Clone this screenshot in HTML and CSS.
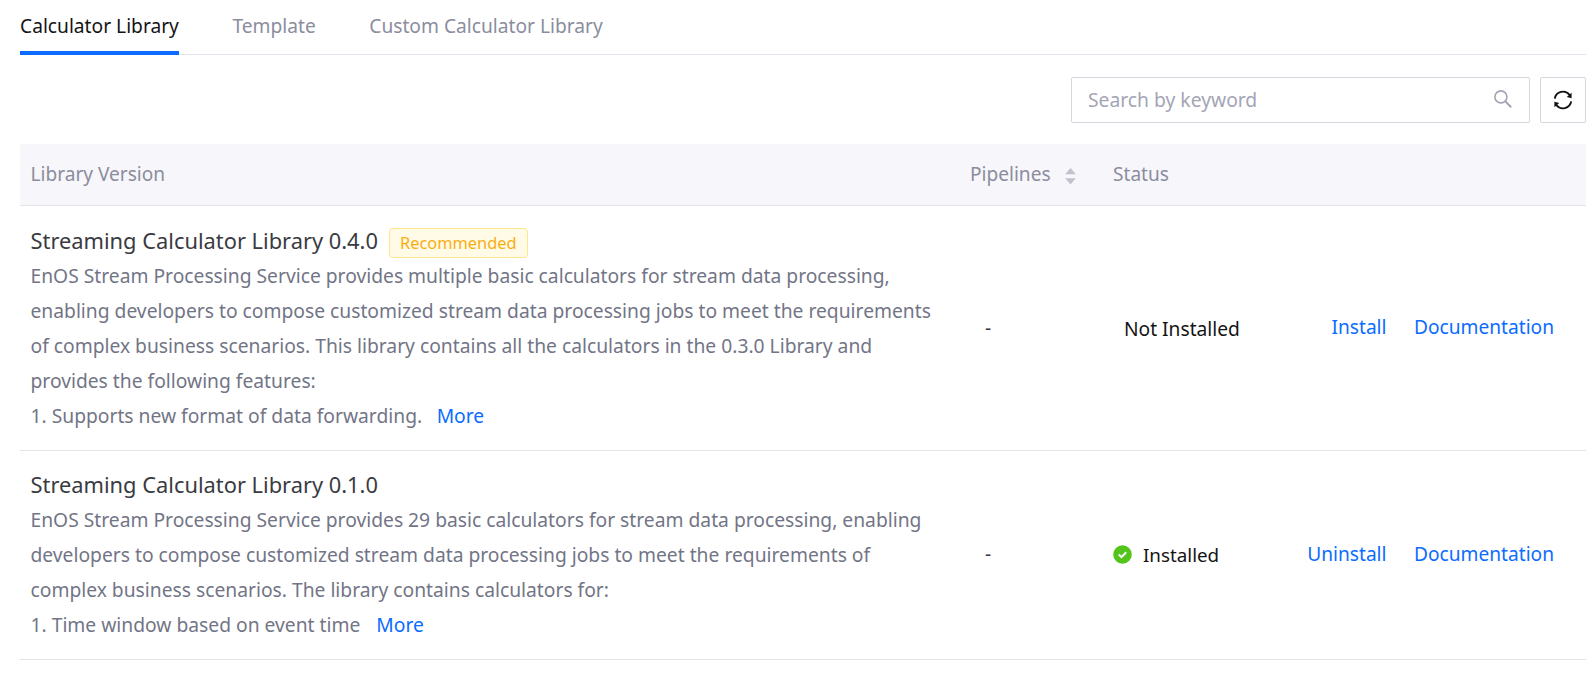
FILE: index.html
```
<!DOCTYPE html>
<html lang="en">
<head>
<meta charset="utf-8">
<title>Calculator Library</title>
<link rel="stylesheet" href="styles.css">
</head>
<body>
<main class="page">
  <nav class="tabs">
    <a class="tab tab-active">Calculator Library</a>
    <a class="tab">Template</a>
    <a class="tab">Custom Calculator Library</a>
  </nav>

  <div class="toolbar">
    <div class="search">
      <span class="placeholder">Search by keyword</span>
      <svg class="search-icon" width="18" height="18" viewBox="0 0 18 18" fill="none" stroke="#a3a5b5" stroke-width="1.6">
        <circle cx="6.9" cy="6.9" r="6"/>
        <path d="M11.2 11.2L17.2 17.2" stroke-width="2"/>
      </svg>
    </div>
    <button class="refresh" aria-label="Refresh">
      <svg width="20" height="20" viewBox="0 0 20 20" fill="none" stroke="#111" stroke-width="1.9">
        <path d="M1.8 8.6A8.3 8.3 0 0 1 16.6 5"/>
        <path d="M18.2 11.4A8.3 8.3 0 0 1 3.4 15"/>
        <path d="M18.6 2.8V8.2L13.8 6.9ZM1.4 17.2V11.8L6.2 13.1Z" fill="#111" stroke="none"/>
      </svg>
    </button>
  </div>

  <section class="table">
    <div class="row head">
      <div class="cell-lib">Library Version</div>
      <div class="cell-pipe">Pipelines
        <svg class="sorter" width="11" height="17" viewBox="0 0 11 17" fill="#c1c2cc">
          <path d="M5.5 0L10.8 6.3H.2ZM5.5 16.6L10.8 10.3H.2Z"/>
        </svg>
      </div>
      <div class="cell-status">Status</div>
      <div></div>
    </div>

    <div class="row">
      <div class="cell-lib">
        <div class="title">Streaming Calculator Library 0.4.0<span class="badge">Recommended</span></div>
        <p class="desc">EnOS Stream Processing Service provides multiple basic calculators for stream data processing,<br>
        enabling developers to compose customized stream data processing jobs to meet the requirements<br>
        of complex business scenarios. This library contains all the calculators in the 0.3.0 Library and<br>
        provides the following features:<br>
        1. Supports new format of data forwarding.<a class="link more">More</a></p>
      </div>
      <div class="cell-pipe dash">-</div>
      <div class="cell-status state state-none">Not Installed</div>
      <div class="actions"><a class="link">Install</a><a class="link doc">Documentation</a></div>
    </div>

    <div class="row row-last">
      <div class="cell-lib">
        <div class="title">Streaming Calculator Library 0.1.0</div>
        <p class="desc">EnOS Stream Processing Service provides 29 basic calculators for stream data processing, enabling<br>
        developers to compose customized stream data processing jobs to meet the requirements of<br>
        complex business scenarios. The library contains calculators for:<br>
        1. Time window based on event time<a class="link more more-wide">More</a></p>
      </div>
      <div class="cell-pipe dash">-</div>
      <div class="cell-status state">
        <svg class="check" width="19" height="19" viewBox="0 0 19 19">
          <circle cx="9.5" cy="9.5" r="9.3" fill="#52c41a"/>
          <path d="M5.7 9.6L8.4 12.1L13.2 7.2" fill="none" stroke="#fff" stroke-width="2"/>
        </svg>
        <span class="state-text">Installed</span>
      </div>
      <div class="actions"><a class="link">Uninstall</a><a class="link doc">Documentation</a></div>
    </div>
  </section>
</main>
</body>
</html>
```
FILE: styles.css
```
* { box-sizing: border-box; }

body {
  margin: 0;
  background: #fff;
  color: #727586;
  font-family: "Noto Sans", "Open Sans", sans-serif;
  font-size: 19.2px;
  line-height: 35px;
  white-space: nowrap;
}

.page { padding: 0 6px 0 20px; }

.tabs {
  display: flex;
  gap: 53.5px;
  height: 55px;
  border-bottom: 1px solid #e4e4ec;
}

.tab {
  height: 55px;
  padding-top: 8px;
  color: #8b8d9d;
}

.tab-active {
  color: #141414;
  border-bottom: 4px solid #0b6cff;
}

.toolbar {
  display: flex;
  justify-content: flex-end;
  gap: 10px;
  padding: 22px 0 21px;
}

.search {
  display: flex;
  align-items: center;
  justify-content: space-between;
  width: 459px;
  height: 46px;
  padding: 0 17px 0 16px;
  border: 1px solid #d5d5df;
  border-radius: 2px;
}

.placeholder {
  padding-bottom: 2px;
  color: #a3a5b5;
  font-size: 19.3px;
}

.search-icon { margin-bottom: 2px; }

.refresh {
  display: flex;
  align-items: center;
  justify-content: center;
  width: 46px;
  height: 46px;
  padding: 0;
  background: #fff;
  border: 1px solid #d5d5df;
  border-radius: 2px;
}

.row {
  display: grid;
  grid-template-columns: 939.5px 143px 1fr 270px;
  align-items: center;
  padding: 17px 32px 17px 10.5px;
  border-bottom: 1px solid #e3e3e9;
}

.row-last { padding-top: 16px; }

.head {
  height: 62px;
  padding-top: 0;
  padding-bottom: 0;
  background: #f6f6fb;
  border-radius: 2px 2px 0 0;
  color: #8b8d9d;
  font-size: 19.1px;
}

.cell-pipe { display: flex; align-items: center; }

.sorter { margin: 4px 0 0 14px; }

.title {
  display: flex;
  align-items: center;
  height: 35px;
  color: #3a3b42;
  font-size: 21.85px;
}

.badge {
  height: 30px;
  margin: 4px 0 0 11px;
  padding: 0 10px;
  background: #fffbe6;
  border: 1px solid #ffe58f;
  border-radius: 4px;
  color: #faad14;
  font-size: 16.4px;
  line-height: 28px;
}

.desc { margin: 0; font-size: 19.26px; }

.link { color: #0b6cff; }

.more { margin-left: 14.5px; }

.more-wide { margin-left: 16px; }

.dash { padding: 0 0 2px 15px; color: #3a3b42; }

.state {
  display: flex;
  align-items: center;
  gap: 11px;
  padding-top: 2px;
  color: #141414;
}

.state-none { padding-top: 1px; padding-left: 11px; }

.state-text { font-size: 18.8px; }

.check { margin-top: -3px; }

.actions {
  display: flex;
  justify-content: flex-end;
  gap: 27.5px;
  padding-bottom: 1px;
  font-size: 19.15px;
}
```
